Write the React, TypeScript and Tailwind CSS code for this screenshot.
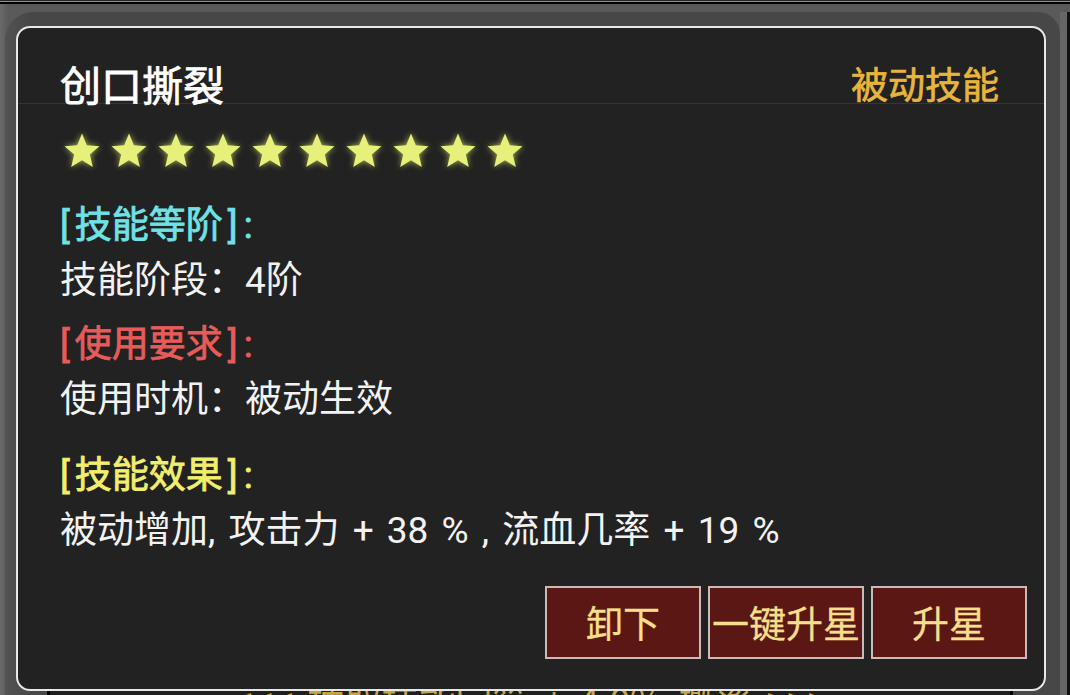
import React from "react";

const FONT = "font-['Noto_Sans_CJK_SC','Noto_Sans',sans-serif]";
const BODY_FONT = "font-['Roboto','Noto_Sans_CJK_SC',sans-serif]";

function Star() {
  return (
    <svg
      width="40"
      height="40"
      viewBox="0 0 24 24"
      className="shrink-0 [filter:drop-shadow(0_0_3px_rgba(214,236,96,0.75))]"
    >
      <polygon
        points="12,1.5 14.9,8.6 22.5,9.2 16.7,14.1 18.5,21.6 12,17.6 5.5,21.6 7.3,14.1 1.5,9.2 9.1,8.6"
        fill="#e6f07a"
      />
    </svg>
  );
}

function ActionButton({ label }: { label: string }) {
  return (
    <button className="w-[156px] h-[73px] border-2 border-[#cbbaba] bg-[#5b1713] text-[37px] leading-none text-[#f5df8c] flex items-center justify-center [-webkit-text-stroke:0.3px_#f5df8c]">
      {label}
    </button>
  );
}

function SectionTitle({ text, className }: { text: string; className: string }) {
  return (
    <div className={`h-[40px] flex flex-row ${className}`}>
      <span className="pr-[5px]">[</span>
      <span>{text}</span>
      <span className="pl-[5px] pr-[6px]">]</span>
      <span>:</span>
    </div>
  );
}

export default function App() {
  const stars = Array.from({ length: 10 });
  return (
    <div className={`${FONT} relative w-[1070px] h-[695px] overflow-hidden bg-[#5c5c5c] flex flex-col`}>
      {/* top edge stripes */}
      <div className="h-[1px] bg-[#262626]" />
      <div className="h-[1px] bg-[#8c8c8c]" />
      <div className="h-[2px] bg-black" />

      {/* game screen frame behind the dialog */}
      <div className="flex-1 flex flex-row pt-[8px] pl-[5px] bg-[linear-gradient(to_right,#6a6a6a,#5a5a5a_8px)]">
        <div className="flex-1 flex flex-col rounded-tl-[28px] rounded-tr-[22px] bg-[linear-gradient(to_right,#525252,#474747_26px)]">
          <div className="flex-1" />
          <div className="ml-[42px] mr-[47px] h-[120px] border-x-[3px] border-black bg-[#1f1f1f] flex flex-col justify-end">
            <div className="-mb-[24px] h-[40px] leading-[40px] text-center text-[37px] text-[#c9a640] [word-spacing:6px]">
              {"<<< 抽取技能宝箱 + 4.0% 概率 >>>"}
            </div>
          </div>
        </div>
        <div className="w-[7px] bg-[#666666]" />
        <div className="w-[3px] bg-[#111111]" />
      </div>

      {/* skill detail dialog */}
      <div className="absolute left-[16px] top-[26px] w-[1030px] h-[665px] rounded-[14px] border-2 border-[#e8e8e8] bg-[#222222] flex flex-col">
        <div className="h-[76px] flex items-end justify-between pl-[42px] pr-[45px] border-b border-[#353535]">
          <div className="text-[41px] leading-[40px] text-white [-webkit-text-stroke:0.8px_#ffffff]">创口撕裂</div>
          <div className="text-[37px] leading-[40px] text-[#e8b53c] [-webkit-text-stroke:0.7px_#e8b53c]">被动技能</div>
        </div>

        <div className="pl-[44px] mt-[27px] h-[40px] flex flex-row items-center gap-[7px]">
          {stars.map((_, i) => (
            <Star key={i} />
          ))}
        </div>

        <div className={`${BODY_FONT} pl-[42px] flex flex-col text-[37px] leading-[40px]`}>
          <SectionTitle
            text="技能等阶"
            className="mt-[35px] text-[#6fe2e6] [-webkit-text-stroke:0.8px_#6fe2e6]"
          />
          <div className="mt-[15px] h-[40px] text-[#f2f2f2]">技能阶段：4阶</div>
          <SectionTitle
            text="使用要求"
            className="mt-[24px] text-[#e65c5a] [-webkit-text-stroke:0.8px_#e65c5a]"
          />
          <div className="mt-[15px] h-[40px] text-[#f2f2f2]">使用时机：被动生效</div>
          <SectionTitle
            text="技能效果"
            className="mt-[36px] text-[#f1ef6c] [-webkit-text-stroke:0.8px_#f1ef6c]"
          />
          <div className="mt-[15px] h-[40px] text-[#f2f2f2] whitespace-pre [word-spacing:4px]">
            {"被动增加, 攻击力 + 38 % , 流血几率 + 19 %"}
          </div>
        </div>

        <div className="mt-[35px] pr-[17px] flex flex-row justify-end gap-[7px]">
          <ActionButton label="卸下" />
          <ActionButton label="一键升星" />
          <ActionButton label="升星" />
        </div>
      </div>
    </div>
  );
}
